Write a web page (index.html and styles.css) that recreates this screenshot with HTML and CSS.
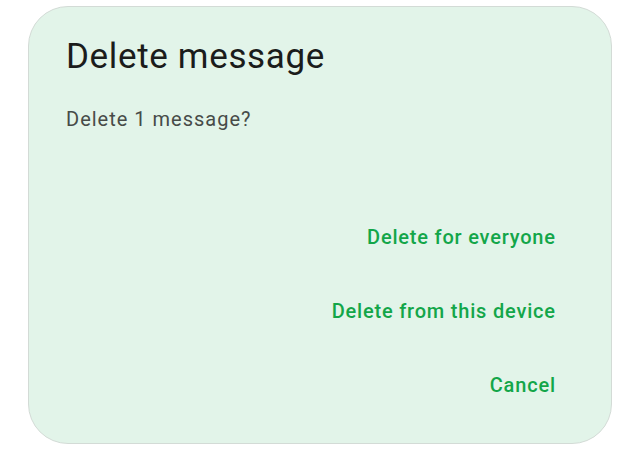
FILE: index.html
```html
<!DOCTYPE html>
<html>
<head>
<meta charset="utf-8">
<link rel="stylesheet" href="styles.css">
</head>
<body>
<div class="dialog">
  <h1 class="title">Delete message</h1>
  <p class="body">Delete 1 message?</p>
  <div class="actions">
    <button class="action">Delete for everyone</button>
    <button class="action">Delete from this device</button>
    <button class="action">Cancel</button>
  </div>
</div>
</body>
</html>
```
FILE: styles.css
```css
html, body {
  margin: 0;
  padding: 0;
  background: #ffffff;
}
body {
  font-family: Roboto, "Noto Sans", sans-serif;
}
.dialog {
  box-sizing: border-box;
  margin: 6px 0 0 28px;
  width: 584px;
  height: 438px;
  background: #e2f4e9;
  border: 1px solid #d3dbd6;
  border-radius: 40px;
  padding: 30px 56px 0 37px;
  display: flex;
  flex-direction: column;
}
.title {
  margin: 0;
  font-size: 35px;
  line-height: 40px;
  font-weight: 400;
  letter-spacing: 0.65px;
  color: #1b1c1b;
}
.body {
  margin: 30px 0 0 0;
  font-size: 20px;
  line-height: 24px;
  letter-spacing: 1px;
  color: #474b48;
}
.actions {
  margin-top: 69px;
  display: flex;
  flex-direction: column;
  align-items: flex-end;
}
.action {
  font-family: Roboto, "Noto Sans", sans-serif;
  background: none;
  border: none;
  padding: 25px 0;
  margin: 0 -0.8px 0 0;
  font-size: 20px;
  line-height: 24px;
  font-weight: 500;
  letter-spacing: 0.8px;
  color: #13a649;
}
```
